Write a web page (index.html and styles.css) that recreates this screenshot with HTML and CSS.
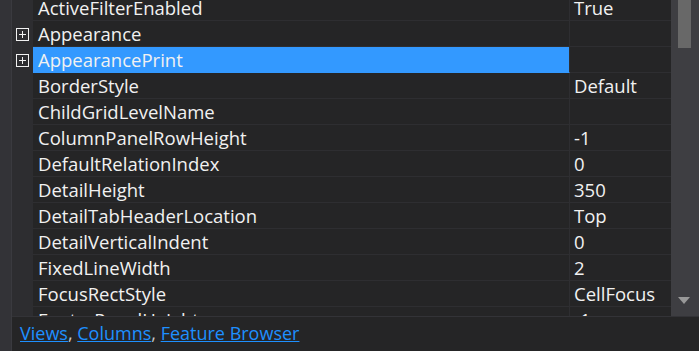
FILE: index.html
```html
<!DOCTYPE html>
<html lang="en">
<head>
    <meta charset="UTF-8">
    <title>Property Grid</title>
    <link rel="stylesheet" href="styles.css">
</head>
<body>
    <div class="side-strip"></div>
    <div class="main">
        <div class="grid-area">
            <div class="rows">
                <div class="row"><div class="gutter"></div><div class="name">ActiveFilterEnabled</div><div class="value">True</div></div>
                <div class="row"><div class="gutter"><span class="expander"></span></div><div class="name">Appearance</div><div class="value"></div></div>
                <div class="row selected"><div class="gutter"><span class="expander"></span></div><div class="name">AppearancePrint</div><div class="value"></div></div>
                <div class="row"><div class="gutter"></div><div class="name">BorderStyle</div><div class="value">Default</div></div>
                <div class="row"><div class="gutter"></div><div class="name">ChildGridLevelName</div><div class="value"></div></div>
                <div class="row"><div class="gutter"></div><div class="name">ColumnPanelRowHeight</div><div class="value">-1</div></div>
                <div class="row"><div class="gutter"></div><div class="name">DefaultRelationIndex</div><div class="value">0</div></div>
                <div class="row"><div class="gutter"></div><div class="name">DetailHeight</div><div class="value">350</div></div>
                <div class="row"><div class="gutter"></div><div class="name">DetailTabHeaderLocation</div><div class="value">Top</div></div>
                <div class="row"><div class="gutter"></div><div class="name">DetailVerticalIndent</div><div class="value">0</div></div>
                <div class="row"><div class="gutter"></div><div class="name">FixedLineWidth</div><div class="value">2</div></div>
                <div class="row"><div class="gutter"></div><div class="name">FocusRectStyle</div><div class="value">CellFocus</div></div>
                <div class="row"><div class="gutter"></div><div class="name">FooterPanelHeight</div><div class="value">-1</div></div>
            </div>
            <div class="scrollbar">
                <div class="thumb"></div>
                <div class="arrow-down"></div>
            </div>
        </div>
        <div class="footer">
            <a href="#">Views</a>, <a href="#">Columns</a>, <a href="#">Feature Browser</a>
        </div>
    </div>
</body>
</html>
```

FILE: styles.css
```css
* {
    margin: 0;
    padding: 0;
    box-sizing: border-box;
}

body {
    width: 699px;
    height: 351px;
    overflow: hidden;
    display: flex;
    background: #252526;
    font-family: 'Open Sans', 'Noto Sans', sans-serif;
    font-size: 18.5px;
    color: #f1f1f1;
}

.side-strip {
    width: 12px;
    background: #333337;
    border-right: 1px solid #3a3a3f;
}

.main {
    flex: 1;
    display: flex;
    flex-direction: column;
}

.grid-area {
    height: 316px;
    display: flex;
    overflow: hidden;
}

.rows {
    flex: 1;
    margin-top: -5px;
}

.row {
    display: flex;
    height: 26px;
}

.gutter {
    width: 21px;
    background: #2d2d30;
    display: flex;
    align-items: center;
    justify-content: center;
}

.expander {
    width: 13px;
    height: 13px;
    border: 1px solid #f1f1f1;
    position: relative;
}

.expander::before,
.expander::after {
    content: '';
    position: absolute;
    background: #f1f1f1;
}

.expander::before {
    left: 2px;
    right: 2px;
    top: 5px;
    height: 1px;
}

.expander::after {
    top: 2px;
    bottom: 2px;
    left: 5px;
    width: 1px;
}

.name,
.value {
    line-height: 25px;
    border-bottom: 1px solid #2e2e31;
    white-space: nowrap;
    overflow: hidden;
}

.name {
    width: 537px;
    padding-left: 5px;
    border-right: 1px solid #2e2e31;
}

.value {
    flex: 1;
    padding-left: 4px;
}

.selected .name {
    background: #3399ff;
    border-bottom-color: #3399ff;
}

.scrollbar {
    width: 28px;
    background: #3e3e42;
    position: relative;
}

.thumb {
    position: absolute;
    left: 7px;
    top: 0;
    width: 13px;
    height: 48px;
    background: #686868;
}

.arrow-down {
    position: absolute;
    left: 7px;
    top: 297px;
    width: 0;
    height: 0;
    border-left: 6.5px solid transparent;
    border-right: 6.5px solid transparent;
    border-top: 7px solid #999999;
}

.footer {
    flex: 1;
    border-top: 1px solid #333337;
    padding-left: 8px;
    padding-top: 4px;
    font-size: 18px;
    color: #c8c8c8;
}

.footer a {
    color: #1e90ff;
}
```
